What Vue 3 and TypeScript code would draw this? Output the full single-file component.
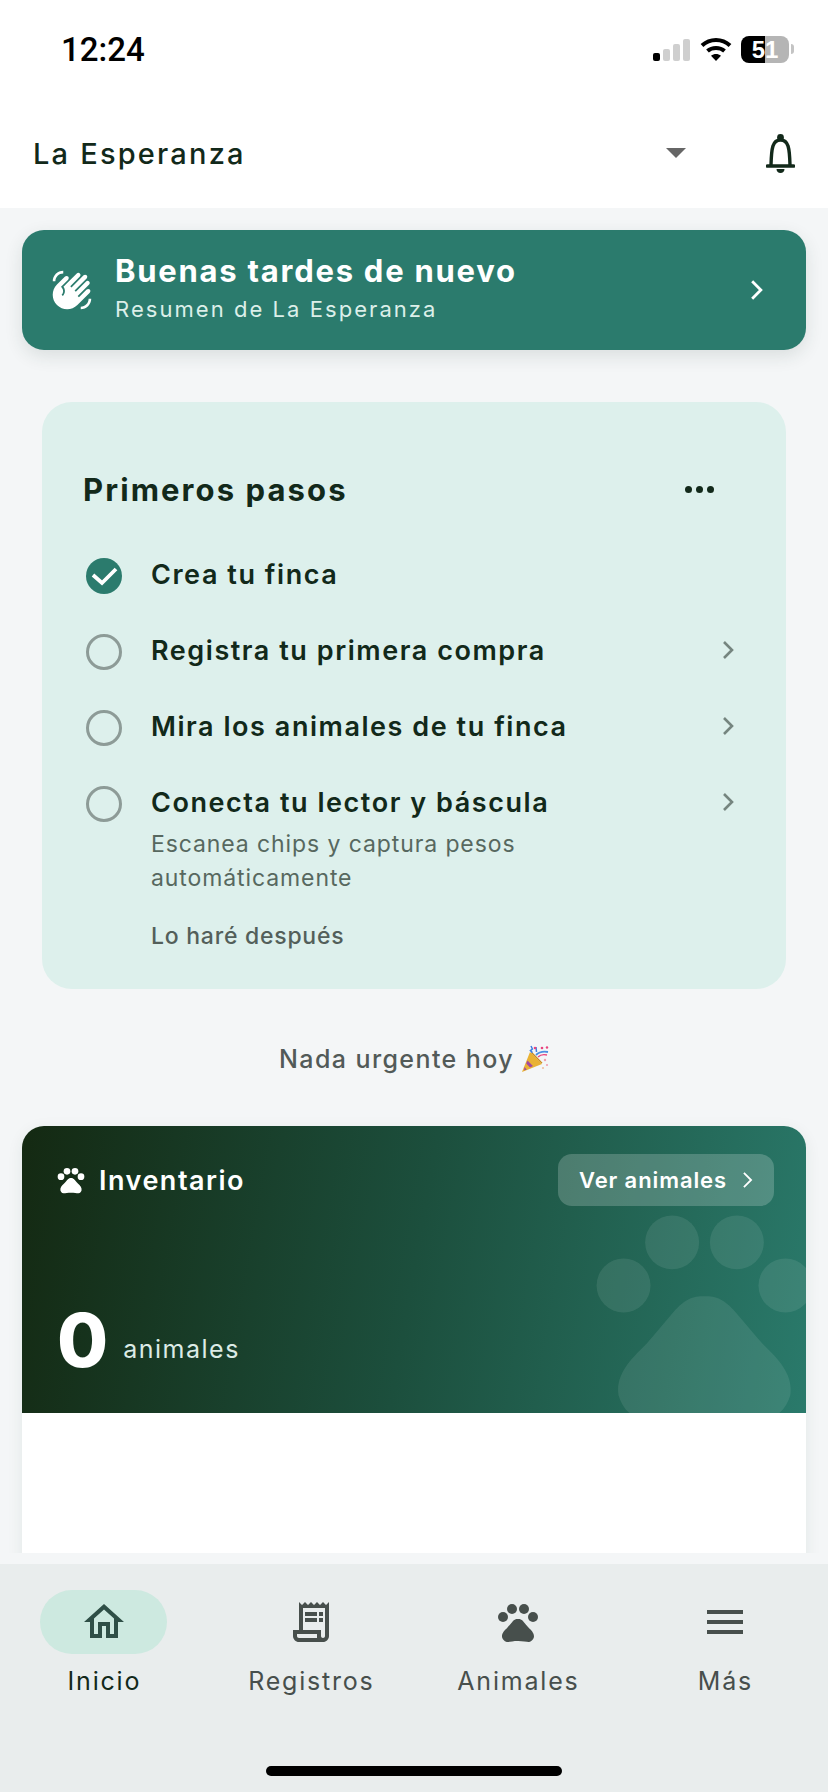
<template>
  <div class="screen">
    <div class="status-bar">
      <span class="clock">12:24</span>
      <div class="status-icons">
        <div class="signal">
          <span class="bar on" style="height: 8px"></span>
          <span class="bar" style="height: 12px"></span>
          <span class="bar" style="height: 17px"></span>
          <span class="bar" style="height: 22px"></span>
        </div>
        <svg class="wifi" viewBox="0 0 32 24" width="32" height="24">
          <path d="M2 8.5C10 1 22 1 30 8.5M7.5 14C12 10 20 10 24.5 14" fill="none" stroke="#000" stroke-width="4" />
          <path d="M16 24l-5-5.2c3-2.4 7-2.4 10 0z" fill="#000" />
        </svg>
        <div class="battery"><span>51</span></div>
        <span class="battery-tip"></span>
      </div>
    </div>

    <header class="top-bar">
      <span class="farm-name">La Esperanza</span>
      <span class="caret"></span>
      <svg class="bell" viewBox="0 0 29 39" width="29" height="39">
        <circle cx="14.5" cy="3.4" r="3.4" fill="#12291a" />
        <path d="M5 31C5.5 14 6.5 6 14.5 6S23.5 14 24 31" fill="none" stroke="#12291a" stroke-width="3.4" />
        <path d="M1.500 32h26" fill="none" stroke="#12291a" stroke-width="3.6" stroke-linecap="round" />
        <path d="M10.500 35h8c0 2.400-1.800 4-4 4s-4-1.600-4-4z" fill="#12291a" />
      </svg>
    </header>

    <main class="main">
      <div class="scroll">
        <section class="greeting">
          <svg class="wave" viewBox="0 0 24 24" width="42" height="42">
            <path d="M23 17c0 3.31-2.69 6-6 6v-1.5c2.48 0 4.5-2.02 4.5-4.5H23zM1 7c0-3.31 2.69-6 6-6v1.5C4.52 2.5 2.5 4.52 2.5 7H1zm7.01-2.68l-4.6 4.6c-3.22 3.22-3.22 8.45 0 11.67s8.45 3.22 11.67 0l7.07-7.07c.49-.49.49-1.28 0-1.77-.49-.49-1.28-.49-1.77 0l-4.42 4.42-.71-.71 6.54-6.54c.49-.49.49-1.28 0-1.77s-1.28-.49-1.77 0l-5.83 5.83-.71-.71 6.89-6.89c.49-.49.49-1.28 0-1.77s-1.28-.49-1.77 0l-6.89 6.89-.69-.7 5.48-5.48c.49-.49.49-1.28 0-1.77s-1.28-.49-1.77 0l-7.62 7.62c1.22 1.57 1.11 3.84-.33 5.28l-.71-.71c1.17-1.17 1.17-3.07 0-4.24l-.35-.35 4.07-4.07c.49-.49.49-1.28 0-1.77-.49-.49-1.29-.49-1.78.01z" />
          </svg>
          <div class="greeting-text">
            <div class="greeting-title">Buenas tardes de nuevo</div>
            <div class="greeting-sub">Resumen de La Esperanza</div>
          </div>
          <svg class="greeting-chevron" viewBox="0 0 12 20" width="13" height="22">
            <path d="M2 2l8 8-8 8" fill="none" stroke="#fff" stroke-width="2.6" />
          </svg>
        </section>

        <section class="steps">
          <div class="steps-head">
            <h2>Primeros pasos</h2>
            <div class="dots"><i></i><i></i><i></i></div>
          </div>
          <div class="step-list">
            <div v-for="step in steps" :key="step.title" class="step">
              <svg v-if="step.done" class="step-mark" viewBox="0 0 36 36" width="36" height="36">
                <circle cx="18" cy="18" r="18" fill="#2b7b6d" />
                <path d="M7 17l9 8 14-14" fill="none" stroke="#fff" stroke-width="3.8" />
              </svg>
              <span v-else class="step-ring"></span>
              <div class="step-text">
                <div class="step-title">{{ step.title }}</div>
                <div v-if="step.hint" class="step-hint">{{ step.hint }}</div>
              </div>
              <svg v-if="!step.done" class="step-chevron" viewBox="0 0 12 20" width="12" height="20">
                <path d="M2 2l8 8-8 8" fill="none" stroke="#75857f" stroke-width="2.6" />
              </svg>
            </div>
          </div>
          <div class="later">Lo haré después</div>
        </section>

        <div class="nothing">
          <span>Nada urgente hoy</span>
          <svg viewBox="0 0 28 28" width="28" height="28">
            <path d="M9 7l12 12L1 27z" fill="#e9b234" />
            <path d="M6.500 15.500l5.500 5.500-3 1.400-3.800-3.800zM3.400 22l2.400 2.400-2.600 1.200z" fill="#a4499e" />
            <path d="M10 8l10.500 10.500 1-.8L11 7z" fill="#c98a1d" />
            <path d="M15 10c3-3 6-4 12-3" fill="none" stroke="#4a90e2" stroke-width="1.800" />
            <path d="M10 1l1.400 3-2 1.600 2 2M15 2l.5 5" fill="none" stroke="#3f7fe0" stroke-width="1.500" />
            <path d="M17 12c2-2 5-3 9-2" fill="none" stroke="#e8457f" stroke-width="1.400" />
            <circle cx="14" cy="3" r="1.300" fill="#e8457f" />
            <circle cx="21" cy="3" r="1.300" fill="#e8457f" />
            <circle cx="26" cy="2.500" r="1.200" fill="#e8457f" />
            <circle cx="24" cy="15" r="1.200" fill="#f0a0b0" />
            <circle cx="26" cy="20" r="1.100" fill="#f0a0b0" />
            <circle cx="22" cy="23" r="1.100" fill="#f0c0a0" />
          </svg>
        </div>

        <section class="inventory">
          <div class="hero">
            <svg class="hero-paw" viewBox="0 0 24 24" width="259" height="259">
              <circle cx="4.5" cy="9.5" r="2.5" />
              <circle cx="9" cy="5.5" r="2.5" />
              <circle cx="15" cy="5.5" r="2.5" />
              <circle cx="19.5" cy="9.5" r="2.5" />
              <path :d="padPath" />
            </svg>
            <div class="hero-head">
              <div class="hero-label">
                <svg viewBox="0 0 24 24" width="32" height="32">
                  <circle cx="4.5" cy="9.5" r="2.5" />
                  <circle cx="9" cy="5.5" r="2.5" />
                  <circle cx="15" cy="5.5" r="2.5" />
                  <circle cx="19.5" cy="9.5" r="2.5" />
                  <path :d="padPath" />
                </svg>
                <span>Inventario</span>
              </div>
              <div class="hero-btn">
                <span>Ver animales</span>
                <svg viewBox="0 0 12 20" width="11" height="18">
                  <path d="M2 2l8 8-8 8" fill="none" stroke="#fff" stroke-width="2" />
                </svg>
              </div>
            </div>
            <div class="hero-count">
              <span class="count">0</span>
              <span class="count-label">animales</span>
            </div>
          </div>
          <div class="inventory-body"></div>
        </section>
      </div>
    </main>

    <nav class="tabs">
      <div v-for="tab in tabs" :key="tab.label" class="tab" :class="{ active: tab.active }">
        <div class="tab-icon">
          <svg viewBox="0 0 24 24" width="48" height="48">
            <template v-if="tab.label === 'Animales'">
              <circle cx="4.5" cy="9.5" r="2.5" />
              <circle cx="9" cy="5.5" r="2.5" />
              <circle cx="15" cy="5.5" r="2.5" />
              <circle cx="19.5" cy="9.5" r="2.5" />
            </template>
            <path :d="tab.icon" />
          </svg>
        </div>
        <span class="tab-label">{{ tab.label }}</span>
      </div>
      <span class="home-indicator"></span>
    </nav>
  </div>
</template>

<script setup lang="ts">
interface Step {
  title: string
  hint?: string
  done?: boolean
}

interface Tab {
  label: string
  icon: string
  active?: boolean
}

const padPath =
  'M17.34 14.86c-.87-1.02-1.6-1.89-2.48-2.91-.46-.54-1.05-1.08-1.75-1.32-.11-.04-.22-.07-.33-.09-.25-.04-.52-.04-.78-.04s-.53 0-.79.05c-.11.02-.22.05-.33.09-.7.24-1.28.78-1.75 1.32-.87 1.02-1.6 1.89-2.48 2.91-1.31 1.31-2.92 2.76-2.62 4.79.29 1.02 1.02 2.03 2.33 2.32.73.15 3.06-.44 5.54-.44h.18c2.48 0 4.81.58 5.54.44 1.31-.29 2.04-1.31 2.33-2.32.31-2.04-1.3-3.49-2.61-4.8z'

const steps: Step[] = [
  { title: 'Crea tu finca', done: true },
  { title: 'Registra tu primera compra' },
  { title: 'Mira los animales de tu finca' },
  { title: 'Conecta tu lector y báscula', hint: 'Escanea chips y captura pesos automáticamente' },
]

const tabs: Tab[] = [
  {
    label: 'Inicio',
    active: true,
    icon: 'M12 5.69l5 4.5V18h-2v-6H9v6H7v-7.81l5-4.5M12 3L2 12h3v8h6v-6h2v6h6v-8h3L12 3z',
  },
  {
    label: 'Registros',
    icon: 'M19.5 3.5L18 2l-1.5 1.5L15 2l-1.5 1.5L12 2l-1.5 1.5L9 2 7.5 3.5 6 2v14H3v3c0 1.66 1.34 3 3 3h12c1.66 0 3-1.34 3-3V2l-1.5 1.5zM15 20H6c-.55 0-1-.45-1-1v-1h10v2zm4-1c0 .55-.45 1-1 1s-1-.45-1-1v-3H8V5h11v14zM9 7h6v2H9zM16 7h2v2h-2zM9 10h6v2H9zM16 10h2v2h-2z',
  },
  { label: 'Animales', icon: padPath },
  { label: 'Más', icon: 'M3 18h18v-2H3v2zm0-5h18v-2H3v2zm0-7v2h18V6H3z' },
]
</script>

<style scoped>
.screen {
  width: 828px;
  height: 1792px;
  display: flex;
  flex-direction: column;
  overflow: hidden;
  background: #fff;
  font-family: Inter, "Noto Sans", sans-serif;
  color: #12291a;
}

.status-bar {
  height: 98px;
  flex: none;
  display: flex;
  align-items: center;
  justify-content: space-between;
  padding: 0 34px 0 61px;
}

.clock {
  font-family: Roboto, sans-serif;
  font-size: 33px;
  font-weight: 500;
  color: #000;
}

.status-icons {
  display: flex;
  align-items: center;
}

.signal {
  display: flex;
  align-items: flex-end;
  gap: 3px;
  height: 23px;
  margin-right: 10px;
}

.bar {
  width: 7px;
  border-radius: 2px;
  background: #cfcfcf;
}

.bar.on {
  background: #000;
}

.wifi {
  margin-right: 9px;
}

.battery {
  width: 48px;
  height: 27px;
  border-radius: 8px;
  background: linear-gradient(90deg, #000 50%, #b5b5b5 50%);
  color: #fff;
  font-family: "Liberation Sans", sans-serif;
  font-size: 24px;
  font-weight: 700;
  line-height: 27px;
  text-align: center;
}

.battery-tip {
  width: 3px;
  height: 10px;
  margin-left: 2px;
  border-radius: 0 3px 3px 0;
  background: #c4c4c4;
}

.top-bar {
  height: 110px;
  flex: none;
  display: flex;
  align-items: center;
  padding: 0 33px;
}

.farm-name {
  flex: 1;
  font-size: 29px;
  font-weight: 500;
  letter-spacing: 2.2px;
}

.caret {
  width: 0;
  height: 0;
  margin-right: 80px;
  border-left: 10px solid transparent;
  border-right: 10px solid transparent;
  border-top: 10px solid #666;
}

.bell {
  flex: none;
}

.main {
  flex: 1;
  min-height: 0;
  padding-bottom: 11px;
  background: #f4f6f7;
  display: flex;
  flex-direction: column;
}

.scroll {
  flex: 1;
  min-height: 0;
  overflow: hidden;
  padding: 22px 22px 0;
}

.greeting {
  height: 120px;
  display: flex;
  align-items: center;
  padding: 0 43px 0 29px;
  border-radius: 22px;
  background: #2b7b6d;
  color: #fff;
  box-shadow: 0 6px 18px rgba(30, 60, 50, 0.12);
}

.wave {
  fill: #fff;
  flex: none;
}

.greeting-text {
  flex: 1;
  margin-left: 22px;
  margin-top: -6px;
}

.greeting-title {
  font-size: 31px;
  font-weight: 700;
  line-height: 40px;
  letter-spacing: 1.75px;
}

.greeting-sub {
  margin-top: 3px;
  font-size: 22px;
  line-height: 30px;
  letter-spacing: 2.05px;
  color: #dcefe9;
}

.steps {
  margin: 52px 20px 0;
  height: 587px;
  padding: 69px 41px 0 42px;
  box-sizing: border-box;
  border-radius: 30px;
  background: #ddf0ec;
}

.steps-head {
  display: flex;
  align-items: center;
  justify-content: space-between;
  height: 36px;
  margin-bottom: 49px;
}

.steps-head h2 {
  margin: 0 0 0 -1px;
  font-size: 31px;
  font-weight: 700;
  letter-spacing: 2.1px;
}

.dots {
  display: flex;
  gap: 4px;
  margin-right: 31px;
}

.dots i {
  width: 7px;
  height: 7px;
  border-radius: 50%;
  background: #12291a;
}

.step-list {
  display: flex;
  flex-direction: column;
  gap: 38px;
}

.step {
  display: flex;
  align-items: flex-start;
  padding-left: 2px;
}

.step-mark,
.step-ring {
  flex: none;
  width: 36px;
  height: 36px;
  margin-top: 2px;
  box-sizing: border-box;
}

.step-ring {
  border: 3px solid #8d9b97;
  border-radius: 50%;
}

.step-text {
  flex: 1;
  margin-left: 29px;
  padding-top: 1px;
}

.step-title {
  font-size: 27px;
  font-weight: 600;
  line-height: 36px;
  letter-spacing: 1.55px;
}

.step-hint {
  margin-top: 6px;
  width: 420px;
  font-size: 23px;
  line-height: 34px;
  letter-spacing: 0.9px;
  color: #57685f;
}

.step-chevron {
  flex: none;
  margin: 8px 11px 0 0;
}

.later {
  margin: 26px 0 0 67px;
  font-size: 23px;
  font-weight: 500;
  line-height: 30px;
  letter-spacing: 0.75px;
  color: #535f5a;
}

.nothing {
  margin-top: 53px;
  height: 34px;
  display: flex;
  align-items: center;
  justify-content: center;
  gap: 7px;
  font-size: 25px;
  font-weight: 500;
  letter-spacing: 1.4px;
  color: #525a58;
}

.inventory {
  margin-top: 50px;
  height: 600px;
  border-radius: 22px;
  background: #fff;
  box-shadow: 0 4px 16px rgba(30, 60, 50, 0.08);
  overflow: hidden;
}

.hero {
  position: relative;
  height: 287px;
  box-sizing: border-box;
  padding: 28px 32px 33px 33px;
  display: flex;
  flex-direction: column;
  justify-content: space-between;
  background: linear-gradient(100deg, #142912 0%, #1c4f3d 50%, #2a7a6b 100%);
  overflow: hidden;
  color: #fff;
}

.hero-paw {
  position: absolute;
  left: 553px;
  top: 57px;
  fill: rgba(255, 255, 255, 0.09);
}

.hero-head {
  position: relative;
  display: flex;
  align-items: center;
  justify-content: space-between;
}

.hero-label {
  display: flex;
  align-items: center;
  gap: 12px;
  font-size: 27px;
  font-weight: 600;
  letter-spacing: 1.5px;
}

.hero-label svg {
  fill: #fff;
}

.hero-btn {
  height: 52px;
  width: 216px;
  box-sizing: border-box;
  padding: 0 21px;
  display: flex;
  align-items: center;
  justify-content: space-between;
  border-radius: 14px;
  background: rgba(255, 255, 255, 0.2);
  font-size: 22px;
  font-weight: 600;
  letter-spacing: 0.9px;
}

.hero-count {
  position: relative;
  display: flex;
  align-items: flex-end;
  gap: 15px;
  padding-left: 2px;
}

.count {
  font-size: 74px;
  font-weight: 800;
  line-height: 80px;
}

.count-label {
  margin-bottom: 16px;
  font-size: 25px;
  line-height: 30px;
  letter-spacing: 1.5px;
  color: #dcebe6;
}

.tabs {
  position: relative;
  height: 228px;
  flex: none;
  display: grid;
  grid-template-columns: repeat(4, 207px);
  align-items: start;
  padding-top: 26px;
  box-sizing: border-box;
  background: #e9eded;
}

.tab {
  display: flex;
  flex-direction: column;
  align-items: center;
}

.tab-icon {
  width: 127px;
  height: 64px;
  display: flex;
  align-items: center;
  justify-content: center;
  border-radius: 32px;
  fill: #474f4c;
}

.tab.active .tab-icon {
  background: #cde9e0;
  fill: #2f4f47;
}

.tab-label {
  margin: 12px -1.8px 0 0;
  font-size: 25px;
  line-height: 30px;
  letter-spacing: 1.8px;
  color: #474f4c;
}

.tab.active .tab-label {
  color: #12291a;
}

.home-indicator {
  position: absolute;
  left: 266px;
  bottom: 16px;
  width: 296px;
  height: 10px;
  border-radius: 5px;
  background: #000;
}
</style>
